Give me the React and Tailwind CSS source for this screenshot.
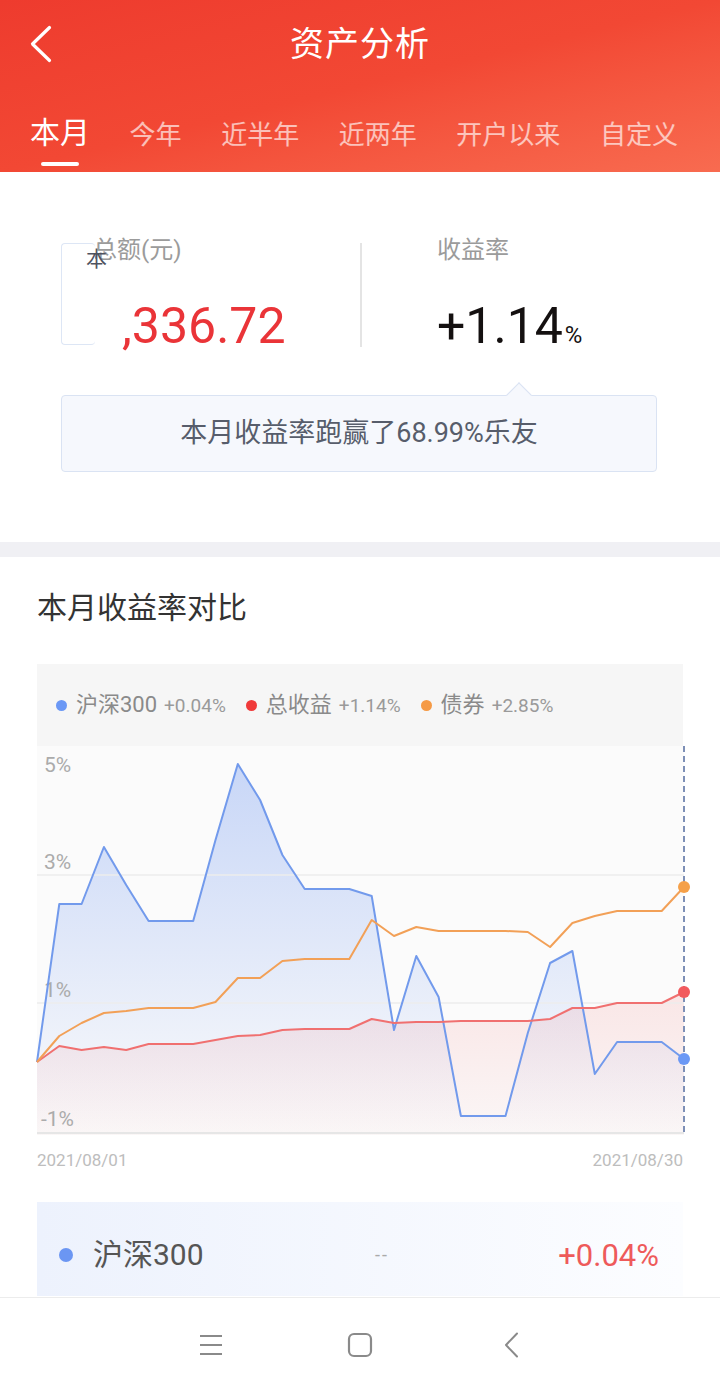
import React from "react";

const tabs = ["本月", "今年", "近半年", "近两年", "开户以来", "自定义"];

const W = 647;
const H = 389;
const blue = [1062, 904, 904, 847, 885, 921, 921, 921, 840, 764, 800, 855, 889, 889, 889, 896, 1030, 956, 997, 1116, 1116, 1116, 1033, 963, 951, 1074, 1042, 1042, 1042, 1059];
const orange = [1062, 1036, 1023, 1013, 1011, 1008, 1008, 1008, 1002, 978, 978, 961, 959, 959, 959, 920, 936, 927, 931, 931, 931, 931, 932, 947, 923, 916, 911, 911, 911, 887];
const red = [1062, 1046, 1050, 1047, 1050, 1044, 1044, 1044, 1040, 1036, 1035, 1030, 1029, 1029, 1029, 1019, 1023, 1022, 1022, 1021, 1021, 1021, 1021, 1019, 1008, 1008, 1003, 1003, 1003, 992];

const pts = (arr) => arr.map((y, i) => [(i * W) / (arr.length - 1), y - 746]);
const line = (arr) => pts(arr).map(([x, y]) => `${x.toFixed(1)},${y}`).join(" ");
const area = (arr) => `0,${H} ${line(arr)} ${W},${H}`;

function Chart() {
  return (
    <svg width={W} height={H} viewBox={`0 0 ${W} ${H}`} className="block overflow-visible bg-[#fbfbfb]">
      <defs>
        <linearGradient id="gb" x1="0" y1="18" x2="0" y2={H} gradientUnits="userSpaceOnUse">
          <stop offset="0" stopColor="#6e96f0" stopOpacity="0.36" />
          <stop offset="1" stopColor="#6e96f0" stopOpacity="0" />
        </linearGradient>
        <linearGradient id="gr" x1="0" y1="245" x2="0" y2={H} gradientUnits="userSpaceOnUse">
          <stop offset="0" stopColor="#f06464" stopOpacity="0.14" />
          <stop offset="1" stopColor="#f06464" stopOpacity="0.03" />
        </linearGradient>
      </defs>
      <polygon points={area(blue)} fill="url(#gb)" />
      <polygon points={area(red)} fill="url(#gr)" />
      <line x1="0" y1="129" x2={W} y2="129" stroke="#ececec" strokeWidth="1.5" />
      <line x1="0" y1="257" x2={W} y2="257" stroke="#ececec" strokeWidth="1.5" />
      <line x1="0" y1="387" x2={W} y2="387" stroke="#e6e6e6" strokeWidth="2" />
      <g fontFamily="Roboto, sans-serif" fontSize="21" fill="#ababab">
        <text x="7" y="26">5%</text>
        <text x="7" y="123">3%</text>
        <text x="7" y="251">1%</text>
        <text x="4" y="380">-1%</text>
      </g>
      <polyline points={line(blue)} fill="none" stroke="#729aec" strokeWidth="2" strokeLinejoin="round" />
      <polyline points={line(red)} fill="none" stroke="#f07070" strokeWidth="2" strokeLinejoin="round" />
      <polyline points={line(orange)} fill="none" stroke="#f2a057" strokeWidth="2" strokeLinejoin="round" />
      <line x1={W} y1="0" x2={W} y2={H} stroke="#7d8fb6" strokeWidth="2" strokeDasharray="6 4" />
      <circle cx={W} cy={887 - 746} r="6" fill="#f5a049" />
      <circle cx={W} cy={992 - 746} r="6" fill="#f25a5e" />
      <circle cx={W} cy={1059 - 746} r="6" fill="#6b98f5" />
    </svg>
  );
}

function Legend({ color, name, value }) {
  return (
    <div className="flex items-center">
      <span className={`h-[11px] w-[11px] rounded-full ${color}`} />
      <span className="ml-[9px] text-[22px] leading-none text-[#8a8a8a]">{name}</span>
      <span className="ml-[7px] text-[19px] leading-none text-[#9a9a9a]">{value}</span>
    </div>
  );
}

export default function App() {
  return (
    <div className="flex h-[1392px] w-[720px] flex-col overflow-hidden bg-white font-['Roboto','Noto_Sans_CJK_SC',sans-serif]">
      <header className="h-[172px] bg-linear-to-br from-[#ee3b2e] via-[#f24834] to-[#f86b50] text-white">
        <div className="grid h-[88px] grid-cols-[1fr_auto_1fr] items-center">
          <div className="pl-[30px]">
            <svg width="22" height="38" viewBox="0 0 22 38" fill="none" stroke="white" strokeWidth="3.2" strokeLinecap="round" strokeLinejoin="round">
              <path d="M19.5 2.5 L2.5 19 L19.5 35.5" />
            </svg>
          </div>
          <h1 className="text-[34px] leading-none tracking-[1px]">资产分析</h1>
          <div />
        </div>
        <nav className="flex items-start justify-between pl-[30px] pr-[42px] pt-[27px]">
          {tabs.map((t, i) =>
            i === 0 ? (
              <div key={t} className="flex flex-col items-center">
                <span className="text-[30px] leading-[36px]">{t}</span>
                <span className="mt-[11px] h-[4px] w-[38px] rounded-full bg-white" />
              </div>
            ) : (
              <span key={t} className="pt-[2px] text-[26px] leading-[36px] text-white/65">
                {t}
              </span>
            )
          )}
        </nav>
      </header>

      <section className="relative h-[370px] bg-white">
        <div className="flex h-[184px] pt-[62px]">
          <div className="w-[360px] pl-[93px]">
            <div className="text-[24px] leading-[32px] text-[#9b9b9b]">总额(元)</div>
            <div className="ml-[29px] mt-[30px] text-[50px] leading-[60px] text-[#ea3438]">,336.72</div>
          </div>
          <div className="mt-[9px] h-[104px] w-[2px] bg-[#e4e4e4]" />
          <div className="pl-[75px]">
            <div className="text-[24px] leading-[32px] text-[#9b9b9b]">收益率</div>
            <div className="mt-[30px] text-[50px] leading-[60px] text-[#141010]">
              +1.14<span className="ml-[2px] text-[24px] leading-none">%</span>
            </div>
          </div>
        </div>

        <div className="absolute left-[61px] top-[71px] h-[102px] w-[34px] rounded-[4px] border-[1.5px] border-r-0 border-[#dde6f5] bg-white" />
        <span className="absolute left-[86px] top-[74px] text-[21px] leading-[26px] text-[#4e5260]">本</span>

        <div className="relative ml-[61px] mt-[39px] flex h-[77px] w-[596px] items-center justify-center rounded-[4px] border-[1.5px] border-[#dae3f3] bg-[#f6f8fd]">
          <span className="absolute left-[448px] top-[-10px] h-[18px] w-[18px] rotate-45 border-l-[1.5px] border-t-[1.5px] border-[#dae3f3] bg-[#f6f8fd]" />
          <span className="text-[27px] leading-none text-[#575d6b]">本月收益率跑赢了68.99%乐友</span>
        </div>
      </section>

      <div className="h-[15px] bg-[#f0f0f4]" />

      <section className="flex h-[740px] flex-col px-[37px] pt-[31px]">
        <h2 className="text-[30px] leading-[40px] text-[#333]">本月收益率对比</h2>
        <div className="mt-[36px] flex h-[82px] items-center gap-[20px] bg-[#f6f6f6] pl-[19px]">
          <Legend color="bg-[#6b98f5]" name="沪深300" value="+0.04%" />
          <Legend color="bg-[#f03a3a]" name="总收益" value="+1.14%" />
          <Legend color="bg-[#f59a45]" name="债券" value="+2.85%" />
        </div>
        <Chart />
        <div className="mt-[13px] flex justify-between text-[17px] leading-[24px] text-[#bdbdbd]">
          <span>2021/08/01</span>
          <span>2021/08/30</span>
        </div>
        <div className="mt-[30px] flex h-[94px] items-center bg-linear-to-r from-[#edf2fd] to-[#fcfdff] pl-[22px] pr-[24px] pt-[12px]">
          <span className="h-[14px] w-[14px] rounded-full bg-[#6b96f3]" />
          <span className="ml-[20px] w-[160px] text-[30px] leading-none text-[#555]">沪深300</span>
          <span className="ml-[122px] text-[18px] leading-none tracking-[2px] text-[#aaa]">--</span>
          <span className="ml-auto text-[31px] leading-none text-[#ee5a5a]">+0.04%</span>
        </div>
      </section>

      <footer className="flex h-[95px] items-center justify-center border-t border-[#ececec] bg-white">
        <svg width="22" height="22" viewBox="0 0 22 22" stroke="#8a8a8a" strokeWidth="2">
          <path d="M0 2h22M0 11h22M0 20h22" />
        </svg>
        <svg width="26" height="26" viewBox="0 0 26 26" className="ml-[125px]" fill="none" stroke="#8a8a8a" strokeWidth="2.2">
          <rect x="2" y="2" width="22" height="22" rx="5" />
        </svg>
        <svg width="16" height="26" viewBox="0 0 16 26" className="ml-[131px]" fill="none" stroke="#8a8a8a" strokeWidth="2" strokeLinecap="round" strokeLinejoin="round">
          <path d="M13 1.5 L2 13 L13 24.5" />
        </svg>
      </footer>
    </div>
  );
}
